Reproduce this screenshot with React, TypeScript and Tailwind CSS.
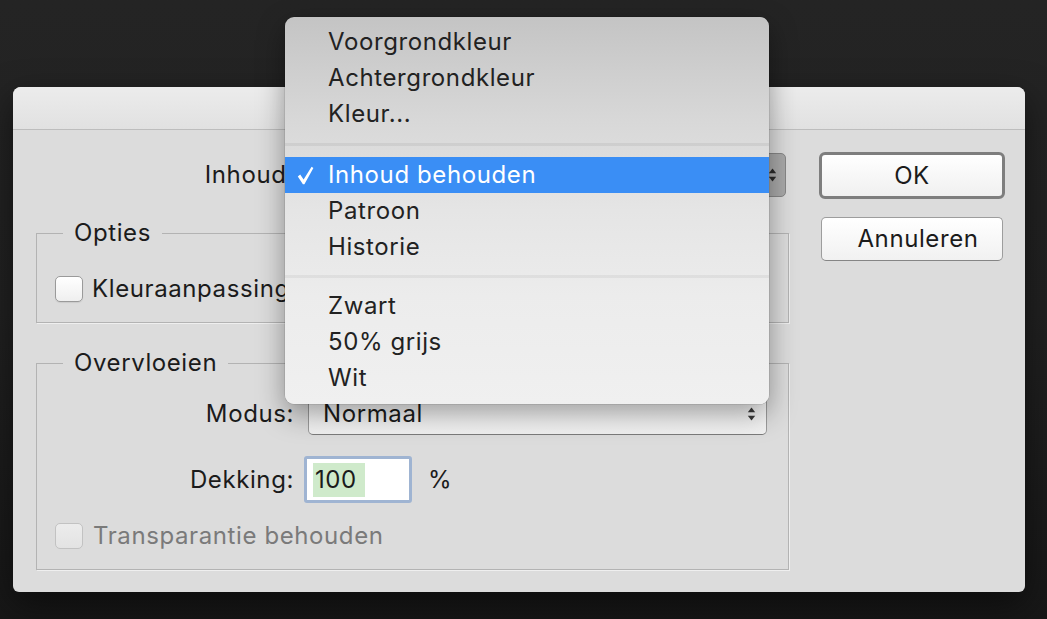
import React from 'react';

const MENU_GROUPS: string[][] = [
  ['Voorgrondkleur', 'Achtergrondkleur', 'Kleur...'],
  ['Inhoud behouden', 'Patroon', 'Historie'],
  ['Zwart', '50% grijs', 'Wit'],
];

const SELECTED = 'Inhoud behouden';

function Stepper({ className }: { className?: string }) {
  return (
    <svg width="9" height="16" viewBox="0 0 9 16" className={className}>
      <path d="M4.5 1.5 L8.2 6.2 H0.8 Z" fill="currentColor" />
      <path d="M4.5 14.5 L8.2 9.8 H0.8 Z" fill="currentColor" />
    </svg>
  );
}

function CheckMark() {
  return (
    <svg width="17" height="19" viewBox="0 0 17 19" className="text-white">
      <path
        d="M0.8 10.6 L3.2 8.6 L6.6 13.4 L14.6 0.8 L16.4 2.1 L7.4 18.2 L5.9 18.2 Z"
        fill="currentColor"
      />
    </svg>
  );
}

function Checkbox({ disabled }: { disabled?: boolean }) {
  return (
    <div
      className={
        disabled
          ? 'w-[28px] h-[26px] rounded-[5px] border border-[#c2c2c2] bg-gradient-to-b from-[#ececec] to-[#e3e3e3]'
          : 'w-[28px] h-[26px] rounded-[5px] border border-[#9a9a9a] bg-gradient-to-b from-white to-[#efefef] shadow-[0_1px_1px_rgba(0,0,0,0.08)]'
      }
    />
  );
}

function PopupMenu() {
  return (
    <div className="absolute left-[285px] top-[17px] w-[484px] rounded-[9px] pt-[7px] pb-[8px] shadow-[0_10px_28px_rgba(0,0,0,0.38),0_0_0_0.5px_rgba(0,0,0,0.15)] bg-[linear-gradient(180deg,#c4c4c4_0%,#d8d8d8_27%,#e5e5e5_50%,#ececec_72%,#f0f0f0_100%)] text-[#222222]">
      {MENU_GROUPS.map((group, gi) => (
        <div key={gi}>
          {gi === 1 && (
            <div className="h-[25px] pt-[11px]">
              <div className="h-[3px] bg-black/[0.06]" />
            </div>
          )}
          {gi === 2 && (
            <div className="h-[23px] pt-[10px]">
              <div className="h-[3px] bg-black/[0.05]" />
            </div>
          )}
          {group.map((item) => {
            const active = item === SELECTED;
            return (
              <div
                key={item}
                className={
                  active
                    ? 'relative h-9 flex items-center pl-[43px] bg-[#3a8ef5] text-white'
                    : 'relative h-9 flex items-center pl-[43px]'
                }
              >
                {active && (
                  <span className="absolute left-[12px] top-0 h-9 flex items-center">
                    <CheckMark />
                  </span>
                )}
                {item}
              </div>
            );
          })}
        </div>
      ))}
    </div>
  );
}

export default function App() {
  return (
    <div className="relative w-[1047px] h-[619px] overflow-hidden bg-gradient-to-b from-[#242424] via-[#212121] to-[#171717] pt-[87px] pl-[13px] font-['Inter','Noto_Sans',sans-serif] text-[24px] tracking-[0.6px] text-[#1b1b1b] leading-none">
      {/* Dialog */}
      <div className="w-[1012px] h-[505px] rounded-t-[8px] rounded-b-[6px] bg-[#dcdcdc] shadow-[0_12px_34px_rgba(0,0,0,0.5)] overflow-hidden">
        <div className="h-[43px] bg-gradient-to-b from-[#ececec] to-[#e1e1e1] border-b border-[#bdbdbd]" />

        <div className="flex pl-[23px]">
          {/* Left column */}
          <div className="w-[753px] pt-[23px] flex flex-col">
            <div className="h-[44px] flex items-center">
              <div className="w-[258px] text-right">Inhoud:</div>
              <div className="ml-[13px] w-[479px] h-[44px] rounded-[5px] border border-[#878787] bg-[#a9a9a9] flex items-center justify-end pr-[8px] text-[#2a2a2a]">
                <Stepper />
              </div>
            </div>

            <fieldset className="mt-[22px] border border-[#b3b3b3] shadow-[1px_1px_0_#efefef] pt-[29px] pb-[20px] pl-[18px]">
              <legend className="ml-[8px] px-[11px] leading-[28px]">Opties</legend>
              <div className="h-[26px] flex items-center">
                <Checkbox />
                <span className="ml-[9px]">Kleuraanpassing</span>
              </div>
            </fieldset>

            <fieldset className="mt-[26px] border border-[#b3b3b3] shadow-[1px_1px_0_#efefef] pt-[16px] pb-[20px]">
              <legend className="ml-[26px] px-[11px] leading-[28px]">Overvloeien</legend>
              <div className="h-[42px] flex items-center">
                <div className="w-[257px] text-right">Modus:</div>
                <div className="ml-[14px] w-[459px] h-[42px] rounded-[5px] border border-[#9b9b9b] border-b-[#7b7b7b] bg-gradient-to-b from-white to-[#f1f1f1] flex items-center justify-between pl-[14px] pr-[10px]">
                  <span>Normaal</span>
                  <Stepper className="text-[#3a3a3a]" />
                </div>
              </div>
              <div className="mt-[21px] h-[47px] flex items-center">
                <div className="w-[257px] text-right">Dekking:</div>
                <div className="ml-[10px] w-[108px] h-[47px] rounded-[3px] border-[3px] border-[#9fb4d2] bg-white flex items-center pl-[6px]">
                  <span className="h-[34px] w-[52px] bg-[#cfeacb] flex items-center pl-[2px]">100</span>
                </div>
                <span className="ml-[16px]">%</span>
              </div>
              <div className="mt-[20px] h-[26px] flex items-center pl-[18px]">
                <Checkbox disabled />
                <span className="ml-[10px] text-[#7a7a7a]">Transparantie behouden</span>
              </div>
            </fieldset>
          </div>

          {/* Right column */}
          <div className="ml-[30px] pt-[22px] flex flex-col">
            <button className="w-[186px] h-[47px] rounded-[6px] border-[3px] border-[#7e7e7e] bg-gradient-to-b from-white to-[#f0f0f0] flex items-center justify-center">
              OK
            </button>
            <button className="mt-[18px] ml-[2px] w-[182px] h-[44px] rounded-[5px] border border-[#9d9d9d] border-b-[#858585] bg-gradient-to-b from-white to-[#f1f1f1] flex items-center justify-center pl-[12px]">
              Annuleren
            </button>
          </div>
        </div>
      </div>

      <PopupMenu />
    </div>
  );
}
